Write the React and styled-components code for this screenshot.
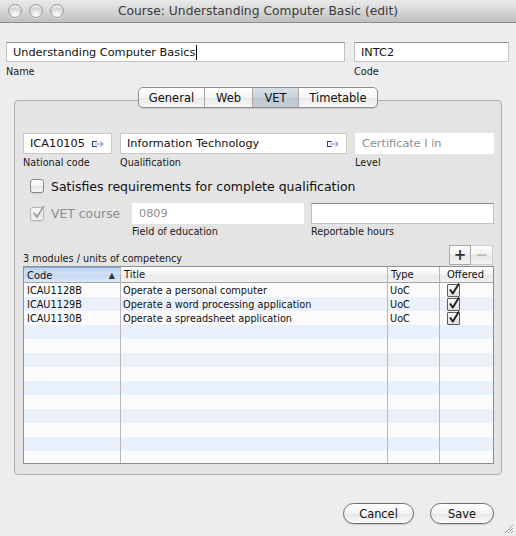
import React from "react";
import styled, { createGlobalStyle, css } from "styled-components";

const FONT = `"DejaVu Sans", "Lucida Grande", Verdana, sans-serif`;

const GlobalStyle = createGlobalStyle`
  html, body { margin: 0; padding: 0; background: #ededed; }
  body { font-family: ${FONT}; }
  *, *::before, *::after { box-sizing: border-box; }
`;

const Window = styled.div`
  position: relative;
  width: 516px;
  height: 536px;
  background: #ededed;
  overflow: hidden;
  display: flex;
  flex-direction: column;
  font-family: ${FONT};
  color: #111;
`;

const TitleBar = styled.div`
  flex: none;
  height: 23px;
  display: grid;
  grid-template-columns: 70px 1fr 70px;
  align-items: center;
  background: linear-gradient(#eaeaea, #d6d6d6 50%, #bfbfbf);
  border-bottom: 1px solid #8d8d8d;
`;

const Lights = styled.div`
  display: flex;
  gap: 7px;
  padding-left: 8px;
`;

const Light = styled.span`
  width: 14px;
  height: 14px;
  border-radius: 50%;
  border: 1px solid #9b9b9b;
  background: radial-gradient(circle at 50% 80%, #ffffff 0%, #e6e6e6 35%, #bcbcbc 75%, #a5a5a5 100%);
  box-shadow: inset 0 3px 2px -1px rgba(255, 255, 255, 0.9), 0 1px 0 rgba(255, 255, 255, 0.5);
`;

const Title = styled.div`
  text-align: center;
  font-size: 12.3px;
  color: #3b3b3b;
  white-space: nowrap;
`;

const Body = styled.div`
  flex: 1;
  display: flex;
  flex-direction: column;
  padding: 19px 7px 0 6px;
`;

const TopRow = styled.div`
  display: flex;
  gap: 9px;
`;

const FieldGroup = styled.div`
  display: flex;
  flex-direction: column;
  ${(p) => (p.$w ? css`width: ${p.$w}px; flex: none;` : css`flex: 1;`)}
`;

const TextBox = styled.div`
  height: ${(p) => p.$h || 20}px;
  display: flex;
  align-items: center;
  justify-content: space-between;
  padding: 0 6px 0 6px;
  background: #fff;
  font-size: 11.3px;
  white-space: nowrap;
  overflow: hidden;
  color: ${(p) => (p.$disabled ? "#8e8e8e" : "#111")};
  ${(p) =>
    p.$variant === "inset" &&
    css`
      border: 1px solid #c3c3c3;
      border-top-color: #8f8f8f;
    `}
  ${(p) =>
    p.$variant === "flat" &&
    css`
      border: 1px solid #c9c9c9;
    `}
  ${(p) =>
    p.$variant === "none" &&
    css`
      border: 1px solid #ffffff;
    `}
`;

const Caret = styled.span`
  display: inline-block;
  width: 1px;
  height: 15px;
  background: #000;
  margin-left: 1px;
  vertical-align: middle;
`;

const Label = styled.div`
  margin-top: ${(p) => (p.$mt != null ? p.$mt : 2)}px;
  font-size: 9.7px;
  line-height: 13px;
  color: #1a1a1a;
  white-space: nowrap;
`;

const TabArea = styled.div`
  margin: 9px 7px 0 8px;
  display: flex;
  flex-direction: column;
`;

const TabBar = styled.div`
  align-self: center;
  position: relative;
  z-index: 1;
  display: flex;
  height: 21px;
  margin-bottom: -8px;
  border: 1px solid #8e8e8e;
  border-radius: 5px;
  overflow: hidden;
  background: linear-gradient(#ffffff, #f4f4f4 50%, #e9e9e9 52%, #f6f6f6);
  box-shadow: 0 1px 1px rgba(0, 0, 0, 0.12);
`;

const Tab = styled.div`
  width: ${(p) => p.$w}px;
  display: flex;
  align-items: center;
  justify-content: center;
  font-size: 11.5px;
  color: #111;
  border-left: 1px solid #a8a8a8;
  &:first-child {
    border-left: none;
  }
  ${(p) =>
    p.$active &&
    css`
      background: linear-gradient(#d9e0e8, #c8d1db 50%, #bcc6d1 52%, #c7d0da);
    `}
`;

const Panel = styled.div`
  border: 1px solid #b0b0b0;
  border-radius: 4px;
  background: #e4e4e4;
  padding: 32px 7px 10px 8px;
  display: flex;
  flex-direction: column;
`;

const FieldRow = styled.div`
  display: flex;
  gap: ${(p) => p.$gap || 8}px;
  align-items: flex-start;
`;

const CheckRow = styled.label`
  display: flex;
  align-items: center;
  gap: 7px;
  height: 18px;
  margin-top: 8px;
  padding-left: 7px;
  font-size: 12.5px;
  color: ${(p) => (p.$disabled ? "#8e8e8e" : "#111")};
  white-space: nowrap;
`;

const VetCheck = styled.div`
  width: 109px;
  flex: none;
  height: 21px;
  display: flex;
  align-items: center;
  gap: 7px;
  padding-left: 7px;
  font-size: 12.4px;
  color: #8e8e8e;
  white-space: nowrap;
`;

const VetRow = styled.div`
  display: flex;
  align-items: flex-start;
  margin-top: 8px;
`;

const BoxWrap = styled.span`
  position: relative;
  width: 14px;
  height: 14px;
  flex: none;
  border-radius: 3px;
  border: 1px solid ${(p) => (p.$disabled ? "#b5b5b5" : "#878787")};
  background: ${(p) =>
    p.$disabled
      ? "linear-gradient(#fbfbfb, #f0f0f0 50%, #e6e6e6 52%, #f3f3f3)"
      : "linear-gradient(#ffffff, #f3f3f3 50%, #e3e3e3 52%, #f8f8f8)"};
  box-shadow: 0 1px 1px rgba(0, 0, 0, 0.08);
  & > svg {
    position: absolute;
    left: 1px;
    top: -3px;
  }
`;

const Checkbox = ({ checked, disabled }) => (
  <BoxWrap $disabled={disabled}>
    {checked && (
      <svg width="14" height="15" viewBox="0 0 14 15">
        <path
          d="M2.2 8.2 L5 12 L11.5 1.5"
          fill="none"
          stroke={disabled ? "#a0a0a0" : "#222"}
          strokeWidth="1.9"
          strokeLinecap="round"
          strokeLinejoin="round"
        />
      </svg>
    )}
  </BoxWrap>
);

const LinkIcon = () => (
  <svg width="14" height="8" viewBox="0 0 14 8">
    <path d="M6 1.5H1.5V6.5H6" fill="none" stroke="#2b3f80" strokeWidth="1.1" />
    <path d="M4 4H12M9.5 1.5L12 4L9.5 6.5" fill="none" stroke="#8aa3d4" strokeWidth="1.1" />
  </svg>
);

const ListHeader = styled.div`
  display: flex;
  align-items: flex-end;
  justify-content: space-between;
  margin-top: 7px;
  height: 20px;
`;

const ListLabel = styled.div`
  font-size: 9.7px;
  line-height: 13px;
  color: #1a1a1a;
  margin-bottom: 0;
`;

const PlusMinus = styled.div`
  display: flex;
  height: 20px;
  margin-right: 1px;
`;

const PMButton = styled.div`
  width: 22px;
  height: 20px;
  display: flex;
  align-items: center;
  justify-content: center;
  font-size: 15px;
  font-weight: bold;
  border: 1px solid ${(p) => (p.$disabled ? "#cfcfcf" : "#a9a9a9")};
  border-left-width: ${(p) => (p.$disabled ? 0 : 1)}px;
  background: linear-gradient(#fdfdfd, #f2f2f2 50%, #e8e8e8 52%, #f3f3f3);
  color: ${(p) => (p.$disabled ? "#bdbdbd" : "#333")};
`;

const Table = styled.div`
  margin-top: 1px;
  height: 198px;
  border: 1px solid #8e8e8e;
  background: #fafafa;
  overflow: hidden;
  display: flex;
  flex-direction: column;
`;

const COLS = "97px 267px 52px 1fr";

const HeaderRow = styled.div`
  flex: none;
  display: grid;
  grid-template-columns: ${COLS};
  height: 16px;
  border-bottom: 1px solid #a6a6a6;
  background: linear-gradient(#ffffff, #f5f5f5 50%, #eaeaea 52%, #f1f1f1);
`;

const HeaderCell = styled.div`
  display: flex;
  align-items: center;
  justify-content: space-between;
  padding: 0 5px 0 3px;
  font-size: 9.9px;
  color: #111;
  border-right: 1px solid #b7b7b7;
  &:last-child {
    border-right: none;
    justify-content: center;
  }
  ${(p) =>
    p.$sorted &&
    css`
      background: linear-gradient(#b9d2f1, #d1e1f6 40%, #c6d9f2 52%, #dbe8f8);
      border-top: 1px solid #86afe4;
    `}
`;

const Arrow = styled.span`
  font-size: 8px;
  color: #333;
`;

const DataRow = styled.div`
  flex: none;
  display: grid;
  grid-template-columns: ${COLS};
  height: 14px;
  background: ${(p) => (p.$odd ? "#ebf1fc" : "#fbfbfb")};
`;

const Cell = styled.div`
  display: flex;
  align-items: center;
  padding-left: ${(p) => (p.$pl != null ? p.$pl : 2)}px;
  font-size: 9.75px;
  color: #111;
  white-space: nowrap;
  overflow: visible;
  border-right: 1px solid #b9b9b9;
  &:last-child {
    border-right: none;
  }
`;

const SmallCheck = styled.span`
  position: relative;
  width: 13px;
  height: 13px;
  border: 1px solid #5d5d5d;
  border-radius: 1px;
  background: linear-gradient(#fafafa, #dedede);
  & > svg {
    position: absolute;
    left: 0;
    top: -3px;
  }
`;

const Offered = () => (
  <SmallCheck>
    <svg width="13" height="14" viewBox="0 0 13 14">
      <path
        d="M2 7.5 L4.8 11.5 L11 1.5"
        fill="none"
        stroke="#1d1d1d"
        strokeWidth="1.9"
        strokeLinejoin="round"
      />
    </svg>
  </SmallCheck>
);

const Footer = styled.div`
  display: flex;
  justify-content: flex-end;
  gap: 16px;
  margin-top: 28px;
  padding-right: 15px;
`;

const PillButton = styled.div`
  width: ${(p) => p.$w}px;
  height: 21px;
  border-radius: 11px;
  border: 1px solid #6f6f6f;
  display: flex;
  align-items: center;
  justify-content: center;
  font-size: 11.4px;
  color: #111;
  background: linear-gradient(#ffffff, #f3f3f3 50%, #e6e6e6 52%, #fbfbfb);
  box-shadow: 0 1px 1px rgba(0, 0, 0, 0.15);
`;

const Grip = styled.svg`
  position: absolute;
  right: 2px;
  bottom: 2px;
`;

const rows = [
  { code: "ICAU1128B", title: "Operate a personal computer", type: "UoC", offered: true },
  { code: "ICAU1129B", title: "Operate a word processing application", type: "UoC", offered: true },
  { code: "ICAU1130B", title: "Operate a spreadsheet application", type: "UoC", offered: true },
];

export default function App() {
  const allRows = [...rows];
  while (allRows.length < 13) allRows.push(null);
  return (
    <>
      <GlobalStyle />
      <Window>
        <TitleBar>
          <Lights>
            <Light />
            <Light />
            <Light />
          </Lights>
          <Title>Course: Understanding Computer Basic (edit)</Title>
          <span />
        </TitleBar>
        <Body>
          <TopRow>
            <FieldGroup $w={339}>
              <TextBox $variant="inset">
                <span>
                  Understanding Computer Basics
                  <Caret />
                </span>
              </TextBox>
              <Label $mt={3}>Name</Label>
            </FieldGroup>
            <FieldGroup>
              <TextBox $variant="inset">
                <span>INTC2</span>
              </TextBox>
              <Label $mt={3}>Code</Label>
            </FieldGroup>
          </TopRow>

          <TabArea>
            <TabBar>
              <Tab $w={65}>General</Tab>
              <Tab $w={48}>Web</Tab>
              <Tab $w={46} $active>
                VET
              </Tab>
              <Tab $w={79}>Timetable</Tab>
            </TabBar>
            <Panel>
              <FieldRow>
                <FieldGroup $w={89}>
                  <TextBox $variant="flat" $h={21}>
                    <span>ICA10105</span>
                    <LinkIcon />
                  </TextBox>
                  <Label>National code</Label>
                </FieldGroup>
                <FieldGroup $w={227}>
                  <TextBox $variant="flat" $h={21}>
                    <span>Information Technology</span>
                    <LinkIcon />
                  </TextBox>
                  <Label>Qualification</Label>
                </FieldGroup>
                <FieldGroup>
                  <TextBox $variant="none" $h={21} $disabled>
                    <span>Certificate I in</span>
                  </TextBox>
                  <Label>Level</Label>
                </FieldGroup>
              </FieldRow>

              <CheckRow>
                <Checkbox />
                Satisfies requirements for complete qualification
              </CheckRow>

              <VetRow>
                <VetCheck>
                  <Checkbox checked disabled />
                  VET course
                </VetCheck>
                <FieldGroup $w={172}>
                  <TextBox $variant="none" $h={21} $disabled>
                    <span>0809</span>
                  </TextBox>
                  <Label $mt={1}>Field of education</Label>
                </FieldGroup>
                <FieldGroup style={{ marginLeft: 7 }}>
                  <TextBox $variant="inset" $h={21} />
                  <Label $mt={1}>Reportable hours</Label>
                </FieldGroup>
              </VetRow>

              <ListHeader>
                <ListLabel>3 modules / units of competency</ListLabel>
                <PlusMinus>
                  <PMButton>+</PMButton>
                  <PMButton $disabled>−</PMButton>
                </PlusMinus>
              </ListHeader>

              <Table>
                <HeaderRow>
                  <HeaderCell $sorted>
                    <span>Code</span>
                    <Arrow>▲</Arrow>
                  </HeaderCell>
                  <HeaderCell>Title</HeaderCell>
                  <HeaderCell>Type</HeaderCell>
                  <HeaderCell>Offered</HeaderCell>
                </HeaderRow>
                {allRows.map((r, i) => (
                  <DataRow key={i} $odd={i % 2 === 1}>
                    <Cell $pl={3}>{r ? r.code : ""}</Cell>
                    <Cell>{r ? r.title : ""}</Cell>
                    <Cell>{r ? r.type : ""}</Cell>
                    <Cell $pl={7}>{r && r.offered ? <Offered /> : null}</Cell>
                  </DataRow>
                ))}
              </Table>
            </Panel>
          </TabArea>

          <Footer>
            <PillButton $w={71}>Cancel</PillButton>
            <PillButton $w={64}>Save</PillButton>
          </Footer>
        </Body>
        <Grip width="11" height="11" viewBox="0 0 11 11">
          <path d="M10 2L2 10M10 5L5 10M10 8L8 10" stroke="#9a9a9a" strokeWidth="1" />
          <path d="M10.5 2.7L2.7 10.5M10.5 5.7L5.7 10.5" stroke="#ffffff" strokeWidth="0.8" />
        </Grip>
      </Window>
    </>
  );
}
